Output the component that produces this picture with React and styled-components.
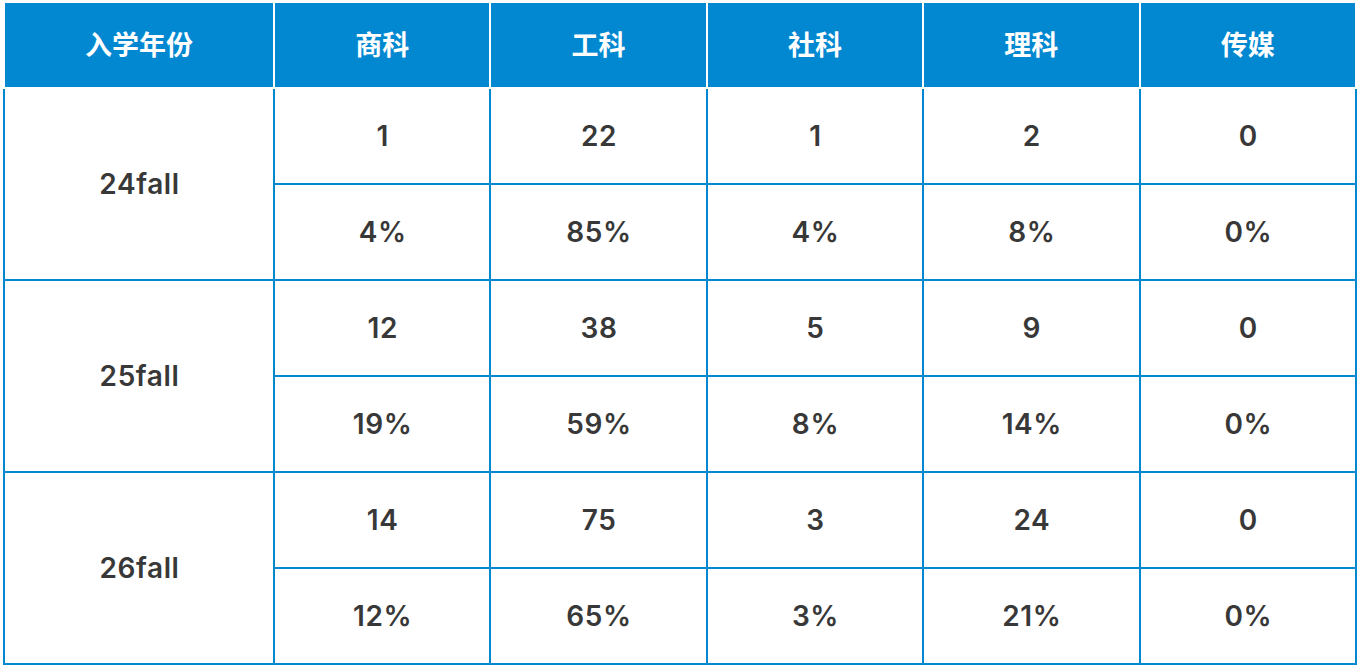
import React from 'react'
import styled, { createGlobalStyle } from 'styled-components'

const BLUE = '#0288d1'

const GlobalStyle = createGlobalStyle`
  html, body {
    margin: 0;
    padding: 0;
    background: #fff;
  }
  body {
    font-family: 'Inter', 'Noto Sans CJK SC', sans-serif;
  }
`

const data = [
  { year: '24fall', counts: [1, 22, 1, 2, 0], shares: [4, 85, 4, 8, 0] },
  { year: '25fall', counts: [12, 38, 5, 9, 0], shares: [19, 59, 8, 14, 0] },
  { year: '26fall', counts: [14, 75, 3, 24, 0], shares: [12, 65, 3, 21, 0] },
]

const headers = ['入学年份', '商科', '工科', '社科', '理科', '传媒']

const App = () => {
  return (
    <Wrapper>
      <GlobalStyle />
      <Table>
        <colgroup>
          <col style={{ width: 270 }} />
          <col />
          <col />
          <col />
          <col />
          <col />
        </colgroup>
        <thead>
          <HeadRow>
            {headers.map((h) => (
              <Th key={h}>{h}</Th>
            ))}
          </HeadRow>
        </thead>
        <tbody>
          {data.map((item) => (
            <React.Fragment key={item.year}>
              <BodyRow>
                <Td rowSpan={2}>{item.year}</Td>
                {item.counts.map((n, i) => (
                  <Td key={i}>{n}</Td>
                ))}
              </BodyRow>
              <BodyRow>
                {item.shares.map((n, i) => (
                  <Td key={i}>{n}%</Td>
                ))}
              </BodyRow>
            </React.Fragment>
          ))}
        </tbody>
      </Table>
    </Wrapper>
  )
}

const Wrapper = styled.div`
  padding: 1px 0 0 3px;
  width: 1354px;
`

const Table = styled.table`
  width: 1354px;
  border-collapse: collapse;
  table-layout: fixed;
`

const HeadRow = styled.tr`
  height: 86px;
`

const Th = styled.th`
  background: ${BLUE};
  color: #fff;
  border: 2px solid #fff;
  font-size: 27px;
  font-weight: 700;
  text-align: center;
  padding: 0 0 4px;
`

const BodyRow = styled.tr`
  height: 96px;
`

const Td = styled.td`
  border: 2px solid ${BLUE};
  color: #383838;
  font-size: 28px;
  font-weight: 600;
  letter-spacing: 0.6px;
  text-align: center;
  padding: 0 0 0 1px;
`

export default App
